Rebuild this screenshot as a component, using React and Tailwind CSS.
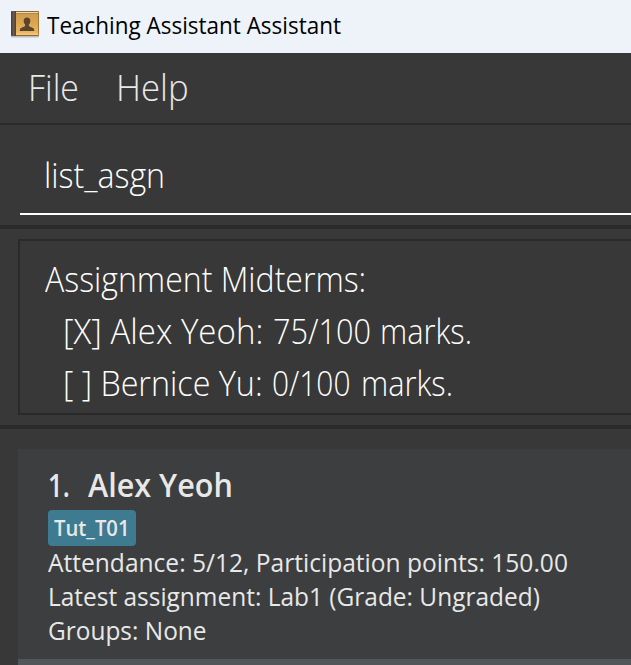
function Text({ className = "", children }) {
  return <span className={`block w-max origin-left whitespace-pre ${className}`}>{children}</span>;
}

function AddressBookIcon() {
  return (
    <svg className="h-[28px] w-[30px]" viewBox="0 0 30 28">
      <defs>
        <linearGradient id="cover" x1="0" y1="0" x2="0" y2="1">
          <stop offset="0" stopColor="#cf9c4c" />
          <stop offset="0.5" stopColor="#dca854" />
          <stop offset="1" stopColor="#eebb66" />
        </linearGradient>
        <linearGradient id="spine" x1="0" y1="0" x2="1" y2="0">
          <stop offset="0" stopColor="#4a3a35" />
          <stop offset="0.5" stopColor="#6b5a52" />
          <stop offset="1" stopColor="#4d3d36" />
        </linearGradient>
      </defs>
      <rect x="1" y="25" width="28" height="2.4" rx="1" fill="#a9a7a5" opacity="0.7" />
      <rect x="1.2" y="1" width="27.8" height="25" rx="1" fill="#93682f" />
      <rect x="5" y="2" width="23.2" height="1.3" fill="#efd7ab" />
      <rect x="5" y="4" width="23.2" height="20.8" fill="url(#cover)" />
      <rect x="5" y="23.6" width="23.2" height="1.2" fill="#f5d08b" />
      <path d="M1 1.8Q1 1 2 1H6V26H2Q1 26 1 25Z" fill="url(#spine)" />
      <path
        d="M17 7.500c2.200 0 3.400 1.400 3.300 3.400 0 1.500-.6 2.700-1.400 3.500v1.400c.3 1 1.500 1.200 3 1.700 1.600.5 2.400 1.300 2.400 3.500H9.700c0-2.200.8-3 2.400-3.500 1.500-.5 2.700-.7 3-1.700v-1.400c-.8-.8-1.400-2-1.400-3.500 0-2 1.100-3.400 3.300-3.400z"
        fill="#5c442c"
      />
    </svg>
  );
}

export default function App() {
  return (
    <div className="flex h-[665px] w-full flex-col overflow-hidden bg-[#383838] font-['Open_Sans','Noto_Sans',sans-serif]">
      <header className="flex h-[53px] shrink-0 items-start bg-[#eef3f9] pl-[10px]">
        <div className="pt-[10px]">
          <AddressBookIcon />
        </div>
        <Text className="ml-[7px] scale-x-[0.977] text-[23px] leading-[50px] text-black">Teaching Assistant Assistant</Text>
      </header>

      <nav className="flex h-[72px] shrink-0 border-b-2 border-[#2a2a2a] pl-[28px] text-[36px] leading-[70px] font-light text-[#e8e8e8]">
        <div className="w-[88px]">
          <Text className="scale-x-[0.94]">File</Text>
        </div>
        <Text className="scale-x-[0.965]">Help</Text>
      </nav>

      <section className="h-[104px] shrink-0 border-b-4 border-[#2a2a2a] pl-5">
        <div className="h-[90px] border-b-2 border-white pl-6 text-[34px] leading-[100px] font-light text-white">
          <Text className="scale-x-[0.945]">list_asgn</Text>
        </div>
      </section>

      <section className="h-[200px] shrink-0 border-b-4 border-[#2a2a2a] pt-[10px] pl-[18px]">
        <div className="h-[176px] border-2 border-r-0 border-[#2a2a2a] pt-[12px] pl-[25px] text-[34px] leading-[52px] font-light text-white">
          <Text className="scale-x-[0.942]">Assignment Midterms:</Text>
          <div className="flex pl-[18px]">
            <div className="w-[210px]">
              <Text className="scale-x-[0.972]">[X] Alex Yeoh:</Text>
            </div>
            <div className="w-[107px]">
              <Text className="scale-x-[0.903]">75/100</Text>
            </div>
            <Text className="scale-x-[0.905]">marks.</Text>
          </div>
          <div className="flex pl-[18px]">
            <div className="w-[209px]">
              <Text className="scale-x-[0.95]">[ ] Bernice Yu:</Text>
            </div>
            <div className="w-[89px]">
              <Text className="scale-x-[0.88]">0/100</Text>
            </div>
            <Text className="scale-x-[0.905]">marks.</Text>
          </div>
        </div>
      </section>

      <main className="flex grow flex-col pt-5 pl-[18px]">
        <article className="h-[210px] shrink-0 bg-[#3c3e3f] pl-[30px] text-[#e8e8e8]">
          <div className="flex h-[61px] pt-[6px] text-[32px] leading-[60px] font-semibold">
            <div className="w-[40px]">
              <Text className="scale-x-[0.8]">1.</Text>
            </div>
            <Text className="scale-x-[0.955]">Alex Yeoh</Text>
          </div>
          <div className="h-[36px] w-[88px] rounded-[4px] bg-[#3e7b91] pl-[6px] text-[22px] leading-[35px] font-semibold">
            <Text className="scale-x-[0.92]">Tut_T01</Text>
          </div>
          <div className="-mt-px text-[25px] leading-[34px]">
            <Text className="scale-x-[0.982]">Attendance: 5/12, Participation points: 150.00</Text>
            <Text className="scale-x-[0.978]">Latest assignment: Lab1 (Grade: Ungraded)</Text>
            <Text className="scale-x-[0.977]">Groups: None</Text>
          </div>
        </article>
        <div className="grow bg-[#515658]" />
      </main>
    </div>
  );
}
